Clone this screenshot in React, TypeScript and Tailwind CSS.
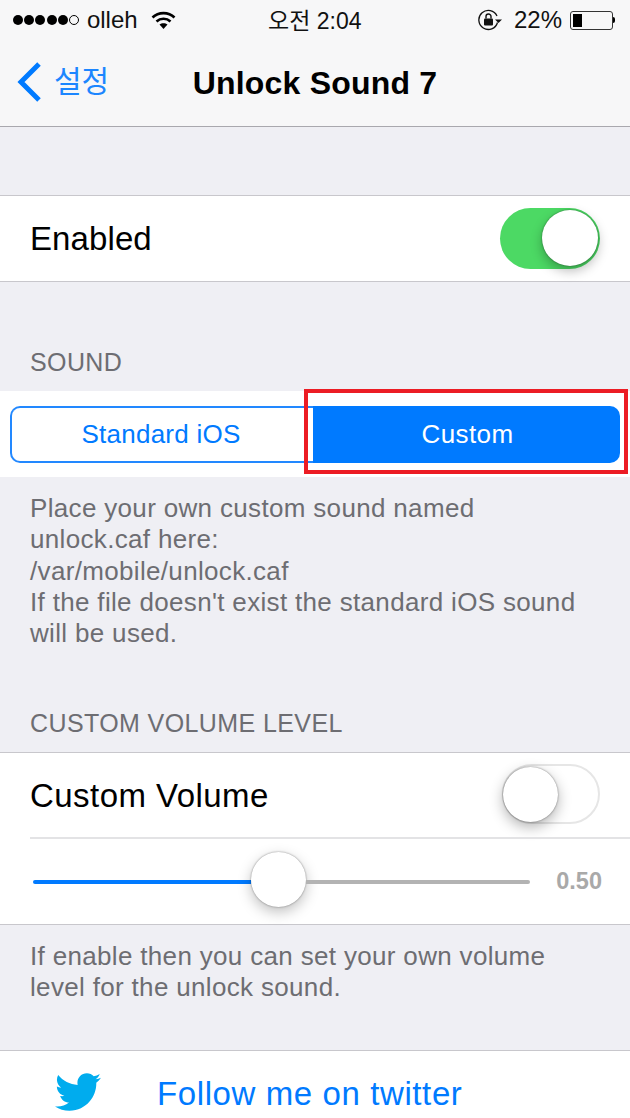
import React from "react";
import { FaTwitter } from "react-icons/fa";

const font = { fontFamily: '"Liberation Sans", "Noto Sans CJK KR", sans-serif' };

function SignalDots() {
  return (
    <div className="flex gap-[1.2px] items-center">
      {[0, 1, 2, 3, 4].map((i) => (
        <div key={i} className="w-[10px] h-[10px] rounded-full bg-black" />
      ))}
      <div className="w-[10px] h-[10px] rounded-full border border-black" />
    </div>
  );
}

function Wifi() {
  return (
    <svg width="25" height="18" viewBox="0 0 25 18" fill="none" stroke="#000">
      <path d="M1.5 6.5C7.5 0.7 17.5 0.7 23.5 6.5" strokeWidth="2.6" />
      <path d="M5.5 10.5C9.5 6.8 15.5 6.8 19.5 10.5" strokeWidth="2.6" />
      <path d="M12.5 18L8.5 13.6C10.8 11.8 14.2 11.8 16.5 13.6Z" fill="#000" stroke="none" />
    </svg>
  );
}

function RotationLock() {
  return (
    <svg width="24" height="22" viewBox="0 0 24 22" fill="none">
      <path d="M19.5 13.5A9.5 9.5 0 1 1 19 7" stroke="#111" strokeWidth="1.3" />
      <path d="M17 10.5L24 10.5L20.5 14Z" fill="#111" />
      <rect x="6" y="9.5" width="9" height="7" rx="1" fill="#111" />
      <path d="M8 9.5V7.5A2.5 2.5 0 0 1 13 7.5V9.5" stroke="#111" strokeWidth="1.4" />
    </svg>
  );
}

function Battery() {
  return (
    <div className="flex items-center">
      <div className="w-[43px] h-[19px] rounded-[3px] border border-[#333] p-[2px] flex">
        <div className="w-[9px] bg-black" />
      </div>
      <div className="w-[2px] h-[6px] bg-black rounded-r-sm" />
    </div>
  );
}

function Toggle({ on }: { on: boolean }) {
  return on ? (
    <div className="w-[100px] h-[61px] -mt-[1px] rounded-full bg-[#4cd964] flex items-center justify-end pr-[2px]">
      <div className="w-[56px] h-[56px] rounded-full bg-white shadow-[0_5px_12px_rgba(0,0,0,0.28),0_0_2px_rgba(0,0,0,0.45)]" />
    </div>
  ) : (
    <div className="w-[98px] h-[60px] -mt-[2px] rounded-full border-2 border-[#e6e6e6] flex items-center">
      <div className="w-[55px] h-[55px] -ml-[1px] rounded-full bg-white shadow-[0_5px_14px_rgba(0,0,0,0.3),0_0_2px_rgba(0,0,0,0.5)]" />
    </div>
  );
}

export default function App() {
  return (
    <div style={font} className="w-[630px] h-[1118px] overflow-hidden bg-[#efeff4] text-black flex flex-col">
      <div className="h-[127px] shrink-0 bg-[#f7f7f8] border-b border-[#a9a8ae] flex flex-col">
        <div className="h-[40px] px-[13px] flex items-center relative">
          <SignalDots />
          <span className="ml-[8px] text-[24px] leading-none text-[#111]">olleh</span>
          <div className="ml-[13px]">
            <Wifi />
          </div>
          <span className="absolute left-[268px] top-[8px] text-[23px] leading-[26px] text-[#111]">오전 2:04</span>
          <div className="ml-auto flex items-center">
            <RotationLock />
            <span className="ml-[12px] text-[24px] leading-none text-[#111]">22%</span>
            <div className="ml-[8px] mr-[2px]">
              <Battery />
            </div>
          </div>
        </div>
        <div className="h-[86px] relative flex items-center justify-center">
          <div className="absolute left-[16px] top-[21px] flex items-center">
            <svg width="26" height="42" viewBox="0 0 26 42" fill="none">
              <path d="M23 3L5 21L23 39" stroke="#007aff" strokeWidth="5" />
            </svg>
            <span className="ml-[12px] text-[30px] leading-none text-[#1c86ff]">설정</span>
          </div>
          <span className="text-[32px] font-bold leading-none tracking-[0.2px] mt-[-1px]">Unlock Sound 7</span>
        </div>
      </div>

      <div className="mt-[68px] h-[87px] shrink-0 bg-white border-y border-[#c8c7cc] pl-[30px] pr-[30px] flex items-center justify-between">
        <span className="text-[33px] leading-none tracking-[0.1px]">Enabled</span>
        <Toggle on />
      </div>

      <div className="mt-[66px] h-[28px] shrink-0 pl-[30px] text-[25px] leading-[28px] tracking-[0.4px] text-[#6d6d72]">
        SOUND
      </div>

      <div className="mt-[15px] h-[86px] shrink-0 bg-white px-[10px] flex items-center relative">
        <div className="w-[303px] h-[57px] pr-[3px] rounded-l-[10px] border-2 border-r-0 border-[#2288ff] flex items-center justify-center text-[26px] tracking-[0.25px] text-[#007aff]">
          Standard iOS
        </div>
        <div className="w-[307px] h-[57px] pl-[2px] rounded-r-[10px] bg-[#007aff] flex items-center justify-center text-[26px] tracking-[0.4px] text-white">
          Custom
        </div>
        <div className="absolute left-[304px] top-[-2px] w-[324px] h-[85px] border-[4.5px] border-[#ec1c24]" />
      </div>

      <div className="pt-[16px] px-[30px] text-[26px] leading-[31.3px] tracking-[0.33px] text-[#6d6d72]">
        Place your own custom sound named
        <br />
        unlock.caf here:
        <br />
        /var/mobile/unlock.caf
        <br />
        If the file doesn't exist the standard iOS sound
        <br />
        will be used.
      </div>

      <div className="mt-[60px] h-[28px] shrink-0 pl-[30px] text-[25px] leading-[28px] tracking-[0.4px] text-[#6d6d72]">
        CUSTOM VOLUME LEVEL
      </div>

      <div className="mt-[15px] h-[173px] shrink-0 bg-white border-y border-[#c8c7cc] flex flex-col">
        <div className="h-[84px] shrink-0 px-[30px] flex items-center justify-between">
          <span className="text-[33px] leading-none tracking-[0.45px]">Custom Volume</span>
          <Toggle on={false} />
        </div>
        <div className="ml-[30px] flex-1 border-t-2 border-[#e3e3e5] pl-[3px] pr-[28px] flex items-center">
          <div className="w-[218px] h-[4px] bg-[#007aff] rounded-l-full" />
          <div className="w-[55px] h-[55px] -mt-[4px] shrink-0 rounded-full bg-white shadow-[0_5px_14px_rgba(0,0,0,0.25),0_0_2px_rgba(0,0,0,0.45)]" />
          <div className="w-[224px] h-[4px] bg-[#b3b3b3] rounded-r-full" />
          <span className="ml-auto text-[23.5px] font-bold leading-none text-[#a9a9a9]">0.50</span>
        </div>
      </div>

      <div className="pt-[16px] px-[30px] text-[26px] leading-[31px] tracking-[0.33px] text-[#6d6d72]">
        If enable then you can set your own volume
        <br />
        level for the unlock sound.
      </div>

      <div className="mt-[47px] flex-1 bg-white border-t border-[#c8c7cc] flex items-start">
        <FaTwitter className="ml-[55px] mt-[18px] text-[#00acee]" size={46} />
        <span className="ml-[56px] mt-[24px] text-[33px] leading-[38px] tracking-[0.6px] text-[#007aff]">
          Follow me on twitter
        </span>
      </div>
    </div>
  );
}
